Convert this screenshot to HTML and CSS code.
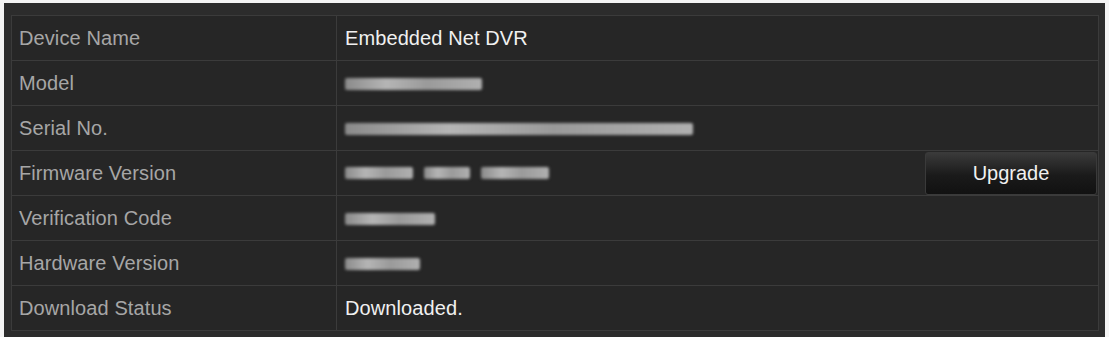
FILE: index.html
```html
<!DOCTYPE html>
<html>
<head>
<meta charset="utf-8">
<link rel="stylesheet" href="styles.css">
</head>
<body>
<div class="frame">
  <table class="info">
    <tr><td class="label">Device Name</td><td class="value">Embedded Net DVR</td></tr>
    <tr><td class="label">Model</td><td class="value"><span class="redact" style="width:137px"></span></td></tr>
    <tr><td class="label">Serial No.</td><td class="value"><span class="redact" style="width:348px"></span></td></tr>
    <tr><td class="label">Firmware Version</td><td class="value split">
      <div class="split-inner">
        <span class="blocks"><span class="redact" style="width:68px"></span><span class="redact" style="width:46px"></span><span class="redact" style="width:68px"></span></span>
        <button class="btn">Upgrade</button>
      </div>
    </td></tr>
    <tr><td class="label">Verification Code</td><td class="value"><span class="redact" style="width:90px"></span></td></tr>
    <tr><td class="label">Hardware Version</td><td class="value"><span class="redact" style="width:75px"></span></td></tr>
    <tr><td class="label">Download Status</td><td class="value">Downloaded.</td></tr>
  </table>
</div>
</body>
</html>
```
FILE: styles.css
```css
html, body {
  margin: 0;
  padding: 0;
  background: #f4f4f4;
}
body {
  width: 1109px;
  height: 337px;
  overflow: hidden;
}
.frame {
  margin: 3px 0 0 4px;
  width: 1101px;
  height: 334px;
  box-sizing: border-box;
  padding: 12px 0 0 7px;
  background: #2c2c2c;
}
.info {
  border-collapse: collapse;
  width: 1088px;
  background: #262626;
  font-family: "Liberation Sans", Arial, sans-serif;
  font-size: 20px;
  letter-spacing: 0.1px;
}
.info td {
  border: 1px solid #3b3b3b;
  height: 45px;
  box-sizing: border-box;
  padding: 0;
  vertical-align: middle;
}
.label {
  width: 325px;
  padding-left: 7px !important;
  color: #a6a6a6;
}
.value {
  padding-left: 8px !important;
  color: #f0f0f0;
}
.info td.split {
  padding-right: 1px;
}
.split-inner {
  display: flex;
  align-items: center;
  justify-content: space-between;
}
.blocks {
  display: flex;
  gap: 11px;
}
.redact {
  display: inline-block;
  height: 12px;
  vertical-align: middle;
  background: linear-gradient(90deg, #8a8a8a, #b5b5b5 30%, #9a9a9a 60%, #b0b0b0);
  filter: blur(1.5px);
  border-radius: 2px;
}
.btn {
  width: 172px;
  height: 43px;
  border: 1px solid #3a3a3a;
  border-radius: 3px;
  background: linear-gradient(#3a3a3a, #1a1a1a 55%, #111);
  color: #f0f0f0;
  font-family: "Liberation Sans", Arial, sans-serif;
  font-size: 20px;
  padding: 0;
}
```
